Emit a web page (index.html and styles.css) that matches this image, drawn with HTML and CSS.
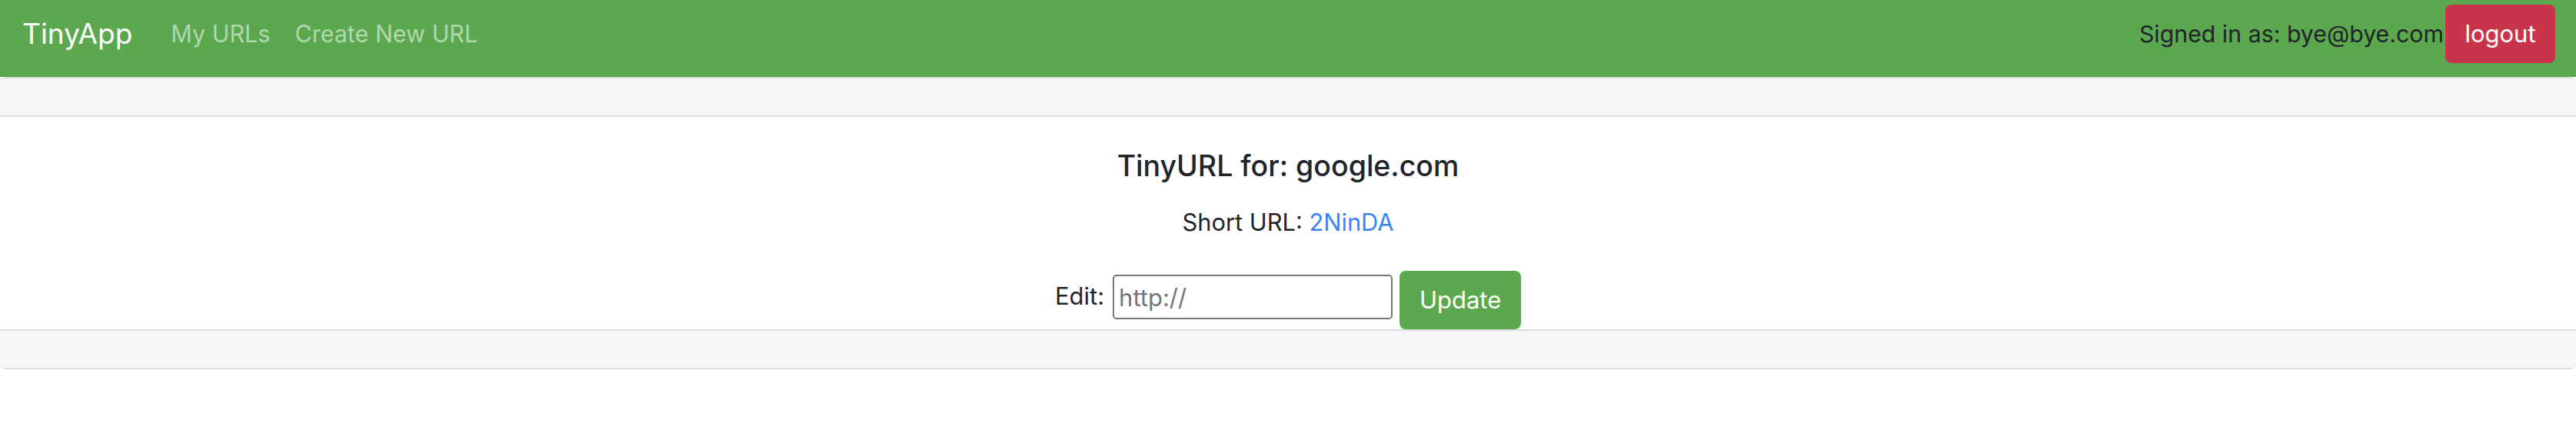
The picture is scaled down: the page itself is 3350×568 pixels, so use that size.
FILE: index.html
```html
<!DOCTYPE html>
<html lang="en">
<head>
<meta charset="utf-8">
<title>TinyApp</title>
<link rel="stylesheet" href="styles.css">
</head>
<body>
<nav class="navbar">
  <a class="brand" href="#">TinyApp</a>
  <div class="nav-links">
    <a class="nav-link" href="#">My URLs</a>
    <a class="nav-link" href="#">Create New URL</a>
  </div>
  <div class="nav-right">
    <span class="signed">Signed in as: bye@bye.com</span>
    <button class="btn btn-danger" type="button">logout</button>
  </div>
</nav>
<main class="card">
  <div class="card-header"></div>
  <div class="card-body">
    <h5 class="card-title">TinyURL for: google.com</h5>
    <p class="card-text">Short URL: <a href="#">2NinDA</a></p>
    <form class="edit-form">
      <label class="edit-label" for="longURL">Edit:</label>
      <input class="edit-input" id="longURL" type="text" placeholder="http://">
      <button class="btn btn-success" type="button">Update</button>
    </form>
  </div>
  <div class="card-footer"></div>
</main>
</body>
</html>
```
FILE: styles.css
```css
* { box-sizing: border-box; }

html, body {
  margin: 0;
  padding: 0;
  background: #ffffff;
}

body {
  font-family: Inter, "Liberation Sans", sans-serif;
  color: #212529;
  font-size: 31px;
}

a { text-decoration: none; }

.navbar {
  display: flex;
  align-items: center;
  height: 100px;
  padding: 6px 27px 18px 29px;
  background: #5ba84f;
}

.brand {
  color: #ffffff;
  font-size: 37px;
  line-height: 60px;
  margin-right: 34px;
  white-space: nowrap;
}

.nav-links {
  display: flex;
  flex: 1;
}

.nav-link {
  color: #b3d7ac;
  font-size: 30.5px;
  line-height: 48px;
  padding: 0 16px;
  white-space: nowrap;
}

.nav-right {
  display: flex;
  align-items: center;
  gap: 2px;
}

.signed {
  white-space: nowrap;
  color: #212529;
  font-size: 30.3px;
  line-height: 48px;
}

.btn {
  font-family: inherit;
  font-size: 31px;
  line-height: 48px;
  height: 76px;
  border: none;
  border-radius: 8px;
  color: #ffffff;
  padding: 0;
  text-align: center;
  cursor: pointer;
}

.btn-danger {
  background: #c8354b;
  width: 143px;
}

.btn-success {
  background: #5ba84f;
  width: 158px;
  margin-left: 9px;
}

.card {
  display: flex;
  flex-direction: column;
  border-top: 2px solid #dddddd;
  border-bottom: 2px solid #dddddd;
  border-radius: 8px;
}

.card-header {
  height: 48px;
  background: #f6f6f6;
  border-bottom: 2px solid #dddddd;
  border-radius: 6px 6px 0 0;
  box-sizing: content-box;
}

.card-body {
  display: flex;
  flex-direction: column;
  align-items: center;
  padding: 40px 0 0;
}

.card-title {
  margin: 0;
  font-size: 37.5px;
  font-weight: 500;
  line-height: 48px;
  white-space: nowrap;
}

.card-text {
  margin: 25px 0 0;
  font-size: 30.8px;
  line-height: 48px;
  white-space: nowrap;
}

.card-text a { color: #3a84f7; }

.edit-form {
  display: flex;
  align-items: flex-start;
  margin-top: 39px;
}

.edit-label {
  line-height: 48px;
  margin-top: 9px;
  margin-right: 11px;
  white-space: nowrap;
}

.edit-input {
  width: 364px;
  height: 58px;
  margin-top: 5px;
  border: 2px solid #767676;
  border-radius: 5px;
  padding: 0 6px;
  font-family: inherit;
  font-size: 31px;
  color: #212529;
  background: #ffffff;
}

.edit-input::placeholder { color: #757575; }

.card-footer {
  height: 48px;
  background: #f6f6f6;
  border-top: 2px solid #dddddd;
  border-radius: 0 0 6px 6px;
  box-sizing: content-box;
}
```
